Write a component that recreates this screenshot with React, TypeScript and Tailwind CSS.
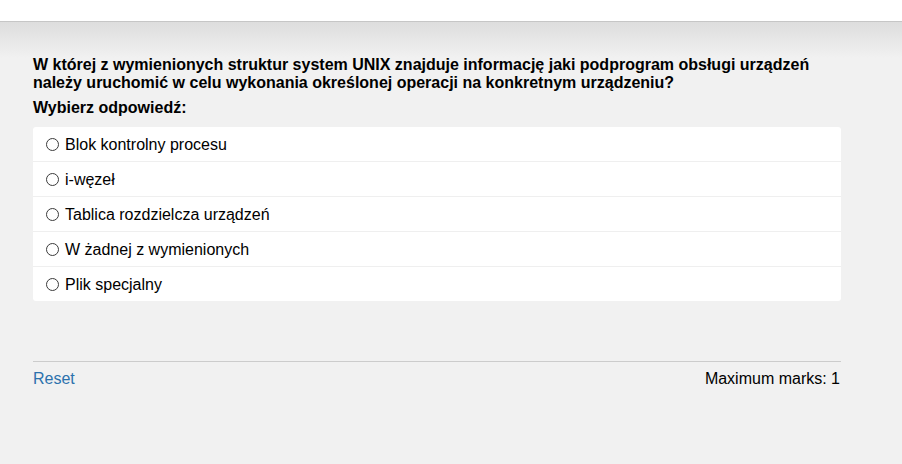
import React from 'react';

const options = [
  'Blok kontrolny procesu',
  'i-węzeł',
  'Tablica rozdzielcza urządzeń',
  'W żadnej z wymienionych',
  'Plik specjalny',
];

function Radio() {
  return <span className="inline-block w-[13px] h-[13px] rounded-full border border-[#3b3b3b] bg-white shrink-0" />;
}

export default function App() {
  return (
    <div className="min-h-screen bg-[#f1f1f1] text-black font-['Liberation_Sans',Arial,sans-serif] text-[16px] leading-[18.4px]">
      <div className="h-[22px] bg-white border-b border-[#c6c6c6]" />
      <div className="bg-[linear-gradient(#dddddd,#f1f1f1_36px)] pt-[34px]">
        <div className="ml-[33px] w-[808px]">
          <p className="font-bold">
            W której z wymienionych struktur system UNIX znajduje informację jaki podprogram obsługi urządzeń należy uruchomić w celu wykonania określonej operacji na konkretnym urządzeniu?
          </p>
          <p className="font-bold mt-[6px]">Wybierz odpowiedź:</p>
          <div className="mt-[10px] bg-white rounded-[3px]">
            {options.map((o, i) => (
              <label
                key={o}
                className={
                  'flex items-center gap-[6px] pl-[13px] pt-[1px] ' +
                  (i < options.length - 1 ? 'h-[35px] border-b border-[#efefef]' : 'h-[34px]')
                }
              >
                <Radio />
                <span>{o}</span>
              </label>
            ))}
          </div>
          <div className="mt-[60px] border-t border-[#cccccc] pt-[8px] flex justify-between">
            <a className="text-[#2c72ad]">Reset</a>
            <span className="mr-[1px]">Maximum marks: 1</span>
          </div>
        </div>
      </div>
    </div>
  );
}
